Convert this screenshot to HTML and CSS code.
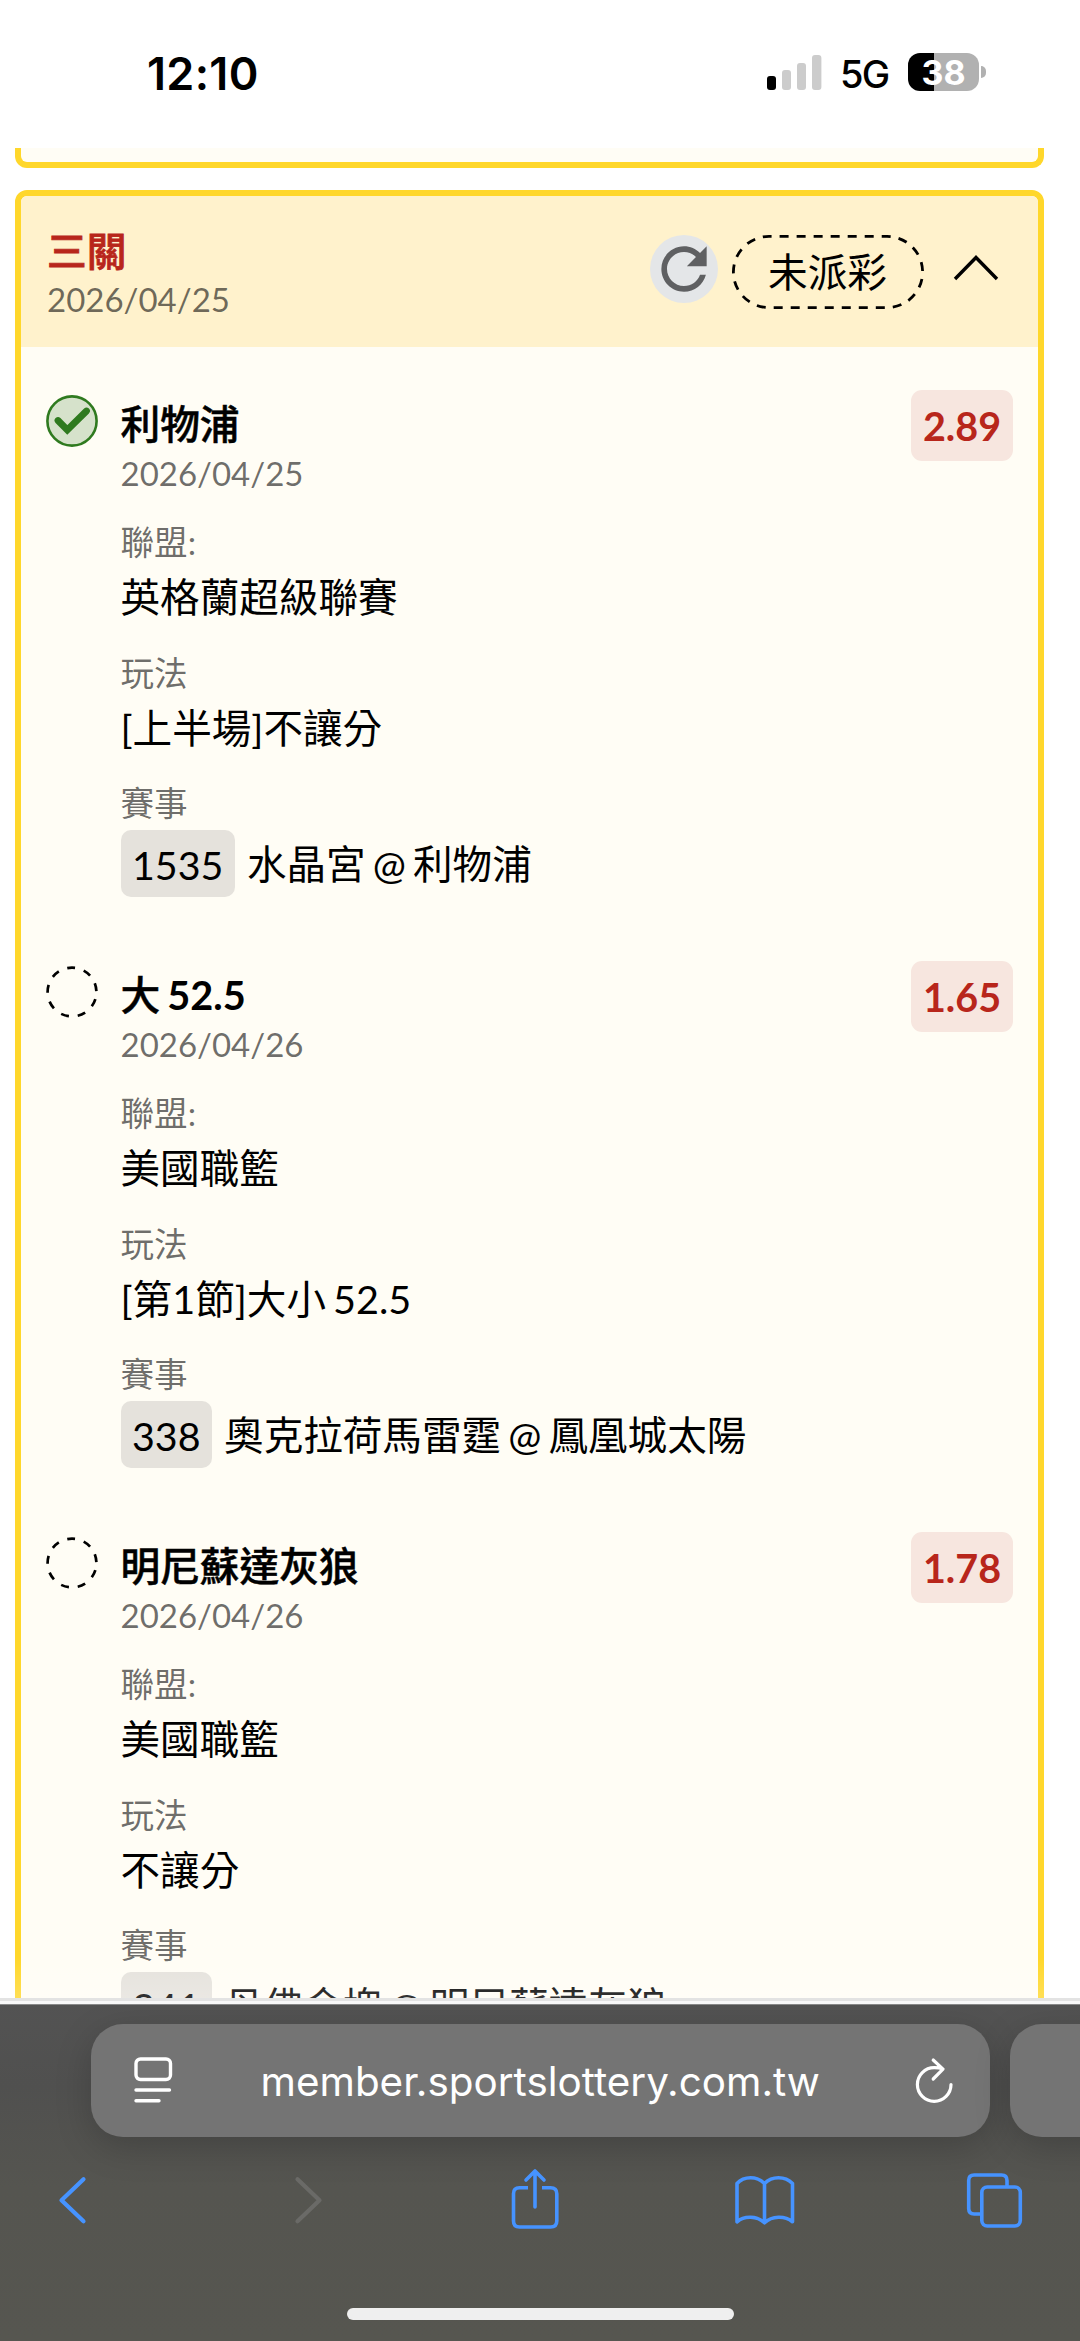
FILE: index.html
```html
<!DOCTYPE html>
<html lang="zh-Hant">
<head>
    <meta charset="UTF-8">
    <meta name="viewport" content="width=device-width, initial-scale=1.0">
    <title>投注紀錄</title>
    <link rel="stylesheet" href="styles.css">
</head>
<body>
    <div class="status-bar">
        <span class="time">12:10</span>
        <div class="status-icons">
            <svg class="signal" width="55" height="36" viewBox="0 0 55 36">
                <rect x="0" y="22" width="9" height="14" rx="3" fill="#000"/>
                <rect x="15" y="16" width="9" height="20" rx="3" fill="#ccc"/>
                <rect x="30" y="9" width="9" height="27" rx="3" fill="#ccc"/>
                <rect x="45" y="1" width="9.4" height="35" rx="3" fill="#ccc"/>
            </svg>
            <span class="network">5G</span>
            <div class="battery"><span>38</span></div>
            <div class="battery-tip"></div>
        </div>
    </div>

    <main class="page">
        <div class="card card-prev"></div>

        <div class="card">
            <div class="card-header">
                <div class="card-title">
                    <h2>三關</h2>
                    <p class="date">2026/04/25</p>
                </div>
                <div class="refresh">
                    <svg width="68" height="68" viewBox="0 0 24 24" fill="#5f6062"><path d="M17.65 6.35C16.2 4.9 14.21 4 12 4c-4.42 0-7.99 3.58-7.99 8s3.57 8 7.99 8c3.73 0 6.84-2.55 7.73-6h-2.08c-.82 2.33-3.04 4-5.65 4-3.31 0-6-2.69-6-6s2.69-6 6-6c1.66 0 3.14.69 4.22 1.78L13 11h7V4l-2.35 2.35z"/></svg>
                </div>
                <div class="pill">
                    <svg class="pill-border" width="192" height="74" viewBox="0 0 192 74">
                        <rect x="1.4" y="1.4" width="189.2" height="71.2" rx="35.6" fill="none" stroke="#000" stroke-width="2.8" stroke-dasharray="9 8.02" stroke-dashoffset="-10.6"/>
                    </svg>
                    <span>未派彩</span>
                </div>
                <svg class="chevron" width="46" height="28" viewBox="0 0 46 28" fill="none" stroke="#000" stroke-width="3.4"><path d="M2 25L23 3.5L44 25"/></svg>
            </div>

            <div class="leg">
                <svg class="leg-icon" width="52" height="52" viewBox="0 0 52 52">
                    <circle cx="26" cy="26" r="24.6" fill="#d6e2cb" stroke="#2f7a1f" stroke-width="2.6"/>
                    <path d="M12 25.5L21.3 35L40.5 16" fill="none" stroke="#2f7a1f" stroke-width="6.8" stroke-linecap="round"/>
                </svg>
                <div class="leg-body">
                    <h3>利物浦</h3>
                    <p class="date">2026/04/25</p>
                    <div class="field"><p class="label">聯盟:</p><p class="value">英格蘭超級聯賽</p></div>
                    <div class="field"><p class="label">玩法</p><p class="value">[上半場]不讓分</p></div>
                    <div class="field"><p class="label">賽事</p><p class="match"><span class="chip">1535</span>水晶宮 @ 利物浦</p></div>
                </div>
                <span class="odds">2.89</span>
            </div>

            <div class="leg">
                <svg class="leg-icon" width="52" height="52" viewBox="0 0 52 52">
                    <circle cx="26" cy="26" r="24.4" fill="none" stroke="#000" stroke-width="2.7" stroke-dasharray="8 9.03" stroke-dashoffset="-7.2"/>
                </svg>
                <div class="leg-body">
                    <h3>大 <b>52.5</b></h3>
                    <p class="date">2026/04/26</p>
                    <div class="field"><p class="label">聯盟:</p><p class="value">美國職籃</p></div>
                    <div class="field"><p class="label">玩法</p><p class="value">[第1節]大小 52.5</p></div>
                    <div class="field"><p class="label">賽事</p><p class="match"><span class="chip">338</span>奧克拉荷馬雷霆 @ 鳳凰城太陽</p></div>
                </div>
                <span class="odds">1.65</span>
            </div>

            <div class="leg">
                <svg class="leg-icon" width="52" height="52" viewBox="0 0 52 52">
                    <circle cx="26" cy="26" r="24.4" fill="none" stroke="#000" stroke-width="2.7" stroke-dasharray="8 9.03" stroke-dashoffset="-7.2"/>
                </svg>
                <div class="leg-body">
                    <h3>明尼蘇達灰狼</h3>
                    <p class="date">2026/04/26</p>
                    <div class="field"><p class="label">聯盟:</p><p class="value">美國職籃</p></div>
                    <div class="field"><p class="label">玩法</p><p class="value">不讓分</p></div>
                    <div class="field"><p class="label">賽事</p><p class="match"><span class="chip">341</span>丹佛金塊 @ 明尼蘇達灰狼</p></div>
                </div>
                <span class="odds">1.78</span>
            </div>
        </div>
        <div class="page-fade"></div>
    </main>

    <footer class="browser-bar">
        <div class="tabs">
            <div class="url-bar">
                <svg width="40" height="48" viewBox="0 0 40 48" fill="none" stroke="#fff" stroke-width="3.4" stroke-linecap="round">
                    <rect x="2" y="2" width="34.5" height="20.5" rx="4.5"/>
                    <path d="M2 33H35.5M2 43.8H25"/>
                </svg>
                <span class="url">member.sportslottery.com.tw</span>
                <svg width="40" height="50" viewBox="0 0 40 50" fill="none" stroke="#fff" stroke-width="3.2" stroke-linecap="round" stroke-linejoin="round">
                    <path d="M36 28.5A16.8 16.8 0 1 1 19.2 11.7C22 11.7 25 12 28 13M18.2 4L28 13.2L18.2 23"/>
                </svg>
            </div>
            <div class="next-tab"></div>
        </div>

        <div class="toolbar">
            <svg width="80" height="80" viewBox="0 0 80 80"><path d="M48.5 19.3L26.5 40.2L48.5 61.2"/></svg>
            <svg class="disabled" width="80" height="80" viewBox="0 0 80 80"><path d="M32.5 19.3L54.5 40.2L32.5 61.2"/></svg>
            <svg class="thin" width="80" height="80" viewBox="0 0 80 80"><path d="M33 27.7H24.5Q18.5 27.7 18.5 33.7V61Q18.5 67 24.5 67H55.5Q61.8 67 61.8 61V33.7Q61.8 27.7 55.5 27.7H47" stroke-linecap="butt"/><path d="M40 47V11M31 20L40 11L49 20"/></svg>
            <svg class="thin" width="80" height="80" viewBox="0 0 80 80"><path d="M12 61.8V23.5C19 15.8 32 15.8 39.5 23.5C47 15.8 60 15.8 67.5 23.5V61.8C60 55.5 47 55.5 39.5 62.8C32 55.5 19 55.5 12 61.8ZM39.5 24V62"/></svg>
            <svg class="thin" width="80" height="80" viewBox="0 0 80 80"><path d="M52 26V20.5Q52 15 46.5 15H19.2Q13.7 15 13.7 20.5V48.5Q13.7 54 19.2 54H26"/><rect x="26.8" y="27" width="38.5" height="39" rx="5.5"/></svg>
        </div>

        <div class="home-indicator"></div>
    </footer>
</body>
</html>
```
FILE: styles.css
```css
* {
    box-sizing: border-box;
}

body {
    display: flex;
    flex-direction: column;
    width: 1080px;
    height: 2341px;
    margin: 0;
    overflow: hidden;
    background-color: #fff;
    color: #000;
    font-family: Lato, "Noto Sans CJK TC", sans-serif;
}

h2, h3, p {
    margin: 0;
}

svg {
    display: block;
    flex: none;
}

/* status bar */
.status-bar {
    display: flex;
    justify-content: space-between;
    flex: none;
    height: 148px;
    padding: 44px 94px 0 147px;
    font-family: Inter, sans-serif;
}

.time {
    font-size: 45px;
    font-weight: 600;
    line-height: 60px;
    letter-spacing: 0.3px;
}

.status-icons {
    display: flex;
    align-items: center;
    height: 56px;
}

.signal {
    margin-right: 18px;
}

.network {
    width: 68px;
    font-size: 38px;
    font-weight: 500;
    line-height: 56px;
    letter-spacing: -1.8px;
    padding-top: 4px;
}

.battery {
    width: 71px;
    height: 38px;
    border-radius: 12px;
    background: linear-gradient(to right, #000 26px, #b1b1b1 26px);
    color: #fff;
    font-size: 34px;
    font-weight: 700;
    line-height: 39px;
    text-align: center;
}

.battery-tip {
    width: 5px;
    height: 12px;
    margin-left: 2px;
    border-radius: 0 5px 5px 0;
    background-color: #b1b1b1;
}

/* bet slips */
.page {
    position: relative;
    flex: none;
    height: 1850px;
    padding: 0 36px 0 15px;
    overflow: hidden;
}

.card {
    border: 6px solid #ffd72b;
    border-radius: 12px;
    background-color: #fffdf5;
    overflow: hidden;
}

.card-prev {
    height: 20px;
    margin-bottom: 22px;
    border-top: none;
    border-radius: 0 0 12px 12px;
}

.card-header {
    display: flex;
    height: 151px;
    padding: 32px 39.5px 0 26px;
    background-color: #fff2cc;
}

.card-title {
    flex: 1;
}

.card-title h2 {
    margin-top: -4px;
    color: #b8261b;
    font-size: 39.7px;
    font-weight: 500;
    line-height: 53px;
    -webkit-text-stroke: 0.8px;
}

.date {
    color: rgba(0, 0, 0, 0.58);
    font-size: 33px;
    line-height: 45px;
}

.refresh {
    width: 68px;
    height: 68px;
    margin: 7px 14px 0 0;
    border-radius: 50%;
    background-color: #e4e6e8;
}

.pill {
    position: relative;
    width: 192px;
    height: 74px;
    margin: 7px 29px 0 0;
    font-size: 39.7px;
    line-height: 74px;
    text-align: center;
}

.pill-border {
    position: absolute;
    top: 0;
    left: 0;
}

.chevron {
    margin-top: 26px;
}

.leg {
    display: flex;
    height: 571px;
    padding: 42px 25px 0 25px;
}

.leg-icon {
    margin: 6px 22.5px 0 0;
}

.leg-body {
    flex: 1;
    padding-top: 8px;
    word-spacing: -3px;
}

.leg-body h3 {
    font-size: 39.7px;
    font-weight: 500;
    line-height: 54px;
    -webkit-text-stroke: 0.5px;
}

.leg-body h3 b {
    -webkit-text-stroke: 0;
}

.field {
    height: 108px;
    margin-bottom: 22.7px;
}

.leg-body .date {
    margin-bottom: 22px;
}

.label {
    color: rgba(0, 0, 0, 0.58);
    font-size: 33.6px;
    line-height: 48px;
}

.value,
.match {
    font-size: 39.6px;
    line-height: 62px;
}

.match {
    display: flex;
    align-items: center;
    height: 67px;
    margin-top: 3px;
}

.chip {
    height: 67px;
    margin-right: 12px;
    padding: 0 11.5px;
    border-radius: 10px;
    background-color: #e5e2dc;
    font-size: 39.4px;
    line-height: 69px;
}

.odds {
    width: 102px;
    height: 71px;
    margin-top: 1px;
    border-radius: 11px;
    background-color: #f7e6df;
    color: #b8261b;
    font-size: 39.5px;
    font-weight: 700;
    line-height: 72px;
    text-align: center;
}

.page-fade {
    position: absolute;
    right: 0;
    bottom: 0;
    left: 0;
    height: 40px;
    background: linear-gradient(rgba(255, 255, 255, 0), rgba(255, 255, 255, 0.2));
}

/* browser controls */
.browser-bar {
    flex: 1;
    padding-top: 23px;
    border-top: 3px solid #e3e3e3;
    background: linear-gradient(#535353, #50504f 25%, #555550 55%, #565650);
    box-shadow: inset 0 3px #f9f9f9, inset 0 4px #8a8a8a;
    overflow: hidden;
}

.tabs {
    display: flex;
    gap: 20.5px;
    padding-left: 91px;
}

.url-bar,
.next-tab {
    flex: none;
    height: 113px;
    border-radius: 32px;
    background-color: #747474;
    box-shadow: 0 10px 36px rgba(0, 0, 0, 0.18);
}

.url-bar {
    display: flex;
    align-items: center;
    justify-content: space-between;
    width: 898.5px;
    padding: 1px 34px 0 43px;
}

.next-tab {
    width: 200px;
}

.url {
    margin-right: 9px;
    color: #fff;
    font-family: Inter, sans-serif;
    font-size: 40.4px;
    white-space: nowrap;
}

.toolbar {
    display: flex;
    gap: 150px;
    margin-top: 23px;
    padding-left: 35px;
    fill: none;
    stroke: #4693ff;
    stroke-width: 4.2;
    stroke-linecap: round;
    stroke-linejoin: round;
}

.toolbar .thin {
    stroke-width: 3.6;
}

.toolbar .disabled {
    stroke: #6a6a67;
}

.home-indicator {
    width: 387px;
    height: 12px;
    margin: 68px auto 0;
    border-radius: 6px;
    background-color: #efefef;
}
```
